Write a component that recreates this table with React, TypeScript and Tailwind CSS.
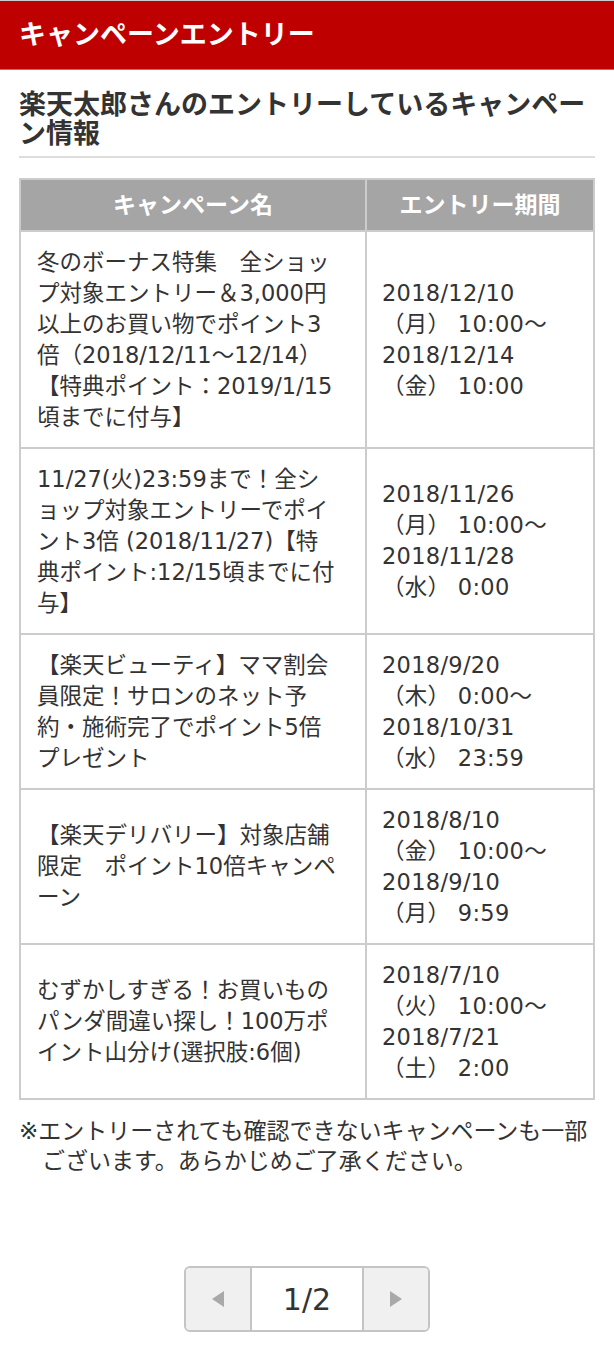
import React from "react";

type Campaign = {
  name: string[];
  period: string[];
};

const campaigns: Campaign[] = [
  {
    name: [
      "冬のボーナス特集　全ショッ",
      "プ対象エントリー＆3,000円",
      "以上のお買い物でポイント3",
      "倍（2018/12/11〜12/14）",
      "【特典ポイント：2019/1/15",
      "頃までに付与】",
    ],
    period: ["2018/12/10", "（月） 10:00〜", "2018/12/14", "（金） 10:00"],
  },
  {
    name: [
      "11/27(火)23:59まで！全シ",
      "ョップ対象エントリーでポイ",
      "ント3倍 (2018/11/27)【特",
      "典ポイント:12/15頃までに付",
      "与】",
    ],
    period: ["2018/11/26", "（月） 10:00〜", "2018/11/28", "（水） 0:00"],
  },
  {
    name: [
      "【楽天ビューティ】ママ割会",
      "員限定！サロンのネット予",
      "約・施術完了でポイント5倍",
      "プレゼント",
    ],
    period: ["2018/9/20", "（木） 0:00〜", "2018/10/31", "（水） 23:59"],
  },
  {
    name: ["【楽天デリバリー】対象店舗", "限定　ポイント10倍キャンペ", "ーン"],
    period: ["2018/8/10", "（金） 10:00〜", "2018/9/10", "（月） 9:59"],
  },
  {
    name: ["むずかしすぎる！お買いもの", "パンダ間違い探し！100万ポ", "イント山分け(選択肢:6個)"],
    period: ["2018/7/10", "（火） 10:00〜", "2018/7/21", "（土） 2:00"],
  },
];

const font = "font-['DejaVu_Sans','Noto_Sans_CJK_JP',sans-serif]";

export default function App() {
  return (
    <div className={`min-h-[1350px] w-[614px] bg-white text-[#333] ${font}`}>
      {/* Title bar */}
      <div className="border-t border-[#ccc] bg-[#bf0000] border-b border-b-[#d86060]">
        <h1 className="flex h-[68px] items-center px-[19px] text-[27px] font-bold text-white">
          キャンペーンエントリー
        </h1>
      </div>

      <div className="px-[19px]">
        <h2 className="mt-[20px] border-b-2 border-[#ddd] pb-[8px] text-[27px] font-bold leading-[29px] text-[#333]">
          楽天太郎さんのエントリーしているキャンペー
          <br />
          ン情報
        </h2>

        {/* Campaign table */}
        <table className="mt-[20px] w-full border-collapse text-[22.5px] leading-[31px]">
          <thead>
            <tr className="bg-[#a5a5a5] text-white">
              <th className="h-[52px] w-[346px] border-2 border-[#ccc] text-[23px] font-bold">キャンペーン名</th>
              <th className="h-[52px] border-2 border-[#ccc] text-[23px] font-bold">エントリー期間</th>
            </tr>
          </thead>
          <tbody>
            {campaigns.map((c, i) => (
              <tr key={i}>
                <td className="border-2 border-[#ccc] py-[14.5px] pl-[16px] pr-[4px] align-middle whitespace-nowrap">
                  {c.name.map((line, j) => (
                    <div key={j}>{line}</div>
                  ))}
                </td>
                <td className="border-2 border-[#ccc] py-[14.5px] pl-[15px] align-middle whitespace-nowrap tracking-[0.3px]">
                  {c.period.map((line, j) => (
                    <div key={j}>{line}</div>
                  ))}
                </td>
              </tr>
            ))}
          </tbody>
        </table>

        <p className="mt-[16px] pl-[1em] -indent-[1em] text-[23px] leading-[30px] whitespace-nowrap">
          ※エントリーされても確認できないキャンペーンも一部
          <br />
          ございます。あらかじめご了承ください。
        </p>

        {/* Pager */}
        <div className="mt-[90px] flex justify-center">
          <div className="flex h-[66px] overflow-hidden rounded-[6px] border-2 border-[#c4c4c4]">
            <button className="flex w-[64px] items-center justify-center bg-[#f0f0f0]">
              <svg width="14" height="18" viewBox="0 0 14 18">
                <path d="M13 1 L1 9 L13 17 Z" fill="#a9a9a9" />
              </svg>
            </button>
            <div className="flex w-[114px] items-center justify-center border-x-2 border-[#c4c4c4] bg-white text-[30px] text-[#333]">
              1/2
            </div>
            <button className="flex w-[64px] items-center justify-center bg-[#f0f0f0]">
              <svg width="14" height="18" viewBox="0 0 14 18">
                <path d="M1 1 L13 9 L1 17 Z" fill="#a9a9a9" />
              </svg>
            </button>
          </div>
        </div>
      </div>
    </div>
  );
}
